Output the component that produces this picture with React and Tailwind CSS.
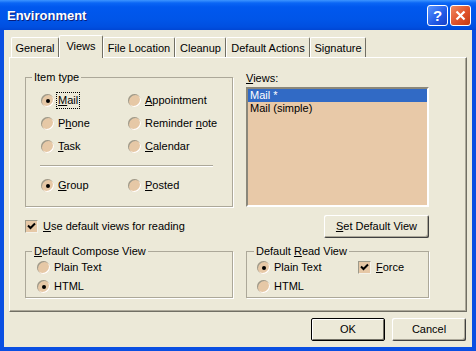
import React from "react";

const Key = ({ children }) => <span className="underline underline-offset-[1px]">{children}</span>;

const Radio = ({ checked }) => (
  <span className="flex h-[13px] w-[13px] shrink-0 items-center justify-center rounded-full bg-[#E6C8A6] shadow-[inset_1px_1px_0_#9c9a8c,inset_-1px_-1px_0_#ffffff]">
    {checked && <span className="h-[4px] w-[4px] rounded-full bg-black" />}
  </span>
);

const Check = ({ checked }) => (
  <span className="flex h-[13px] w-[13px] shrink-0 items-center justify-center border border-[#9D9A8A] border-b-[#f4f2ea] border-r-[#f4f2ea] bg-[#E6C8A6]">
    {checked && (
      <svg width="11" height="11" viewBox="0 0 11 11">
        <path d="M2 4.5 L4.5 7 L9 2.5" fill="none" stroke="#000" strokeWidth="2" />
      </svg>
    )}
  </span>
);

const Option = ({ checked, focus, children, className = "" }) => (
  <div className={`flex items-center gap-[4px] whitespace-nowrap ${className}`}>
    <Radio checked={checked} />
    <span className={focus ? "outline-1 outline-dotted outline-black outline-offset-[1px]" : ""}>{children}</span>
  </div>
);

// etched group box; padding lives on the inner div so the legend stays put
const Group = ({ legend, className = "", inner = "", legendClass = "ml-[6px]", children }) => (
  <fieldset className={`min-w-0 border border-[#ACA899] shadow-[1px_1px_0_#ffffff] ${className}`}>
    <legend className={`px-[2px] leading-[13px] ${legendClass}`}>{legend}</legend>
    <div className={inner}>{children}</div>
  </fieldset>
);

const Button = ({ children, isDefault, className = "" }) => (
  <div
    className={`flex h-[23px] items-center justify-center rounded-[2px] bg-[#ECE9D8] ${
      isDefault
        ? "border border-black shadow-[inset_1px_1px_0_#ffffff,inset_-1px_-1px_0_#716F64]"
        : "shadow-[inset_1px_1px_0_#ffffff,inset_-1px_-1px_0_#404040,inset_-2px_-2px_0_#ACA899]"
    } ${className}`}
  >
    {children}
  </div>
);

const TABS = [
  { label: "General", w: "w-[48px]" },
  { label: "Views", w: "w-[44px]", active: true },
  { label: "File Location", w: "w-[72px]" },
  { label: "Cleanup", w: "w-[51px]" },
  { label: "Default Actions", w: "w-[84px]" },
  { label: "Signature", w: "w-[56px]" },
];

export default function App() {
  return (
    <div className="flex h-[351px] w-[476px] flex-col bg-[#0A4FE2] font-['Liberation_Sans',Arial,sans-serif] text-[11px] leading-[13px] text-black">
      {/* Title bar */}
      <div className="flex h-[30px] shrink-0 items-center bg-[linear-gradient(180deg,#3d95ff_0px,#0a66f5_3px,#0058ee_7px,#0055e8_20px,#004fe0_27px,#0046d4_30px)] pl-[7px] pr-[5px]">
        <span className="flex-1 text-[13px] font-bold text-white [text-shadow:1px_1px_0_#0a1e7a]">Environment</span>
        <div className="flex gap-[2px]">
          <div className="flex h-[21px] w-[21px] items-center justify-center rounded-[3px] border border-white bg-[linear-gradient(135deg,#5a95ff,#2159e6_60%,#1941c8)] text-[15px] font-bold text-white">
            ?
          </div>
          <div className="flex h-[21px] w-[21px] items-center justify-center rounded-[3px] border border-white bg-[linear-gradient(135deg,#f08a63,#e0522a_55%,#c23a12)]">
            <svg width="11" height="11" viewBox="0 0 11 11">
              <path d="M1.5 1.5 L9.5 9.5 M9.5 1.5 L1.5 9.5" stroke="#fff" strokeWidth="2.2" />
            </svg>
          </div>
        </div>
      </div>

      {/* Client area */}
      <div className="mx-[4px] flex flex-1 flex-col bg-[#ECE9D8]">
        {/* Tabs */}
        <div className="flex h-[27px] items-end pl-[7px]">
          {TABS.map((t) => (
            <div
              key={t.label}
              className={`${t.w} flex items-center justify-center rounded-t-[2px] border-l border-t border-r border-l-white border-t-white border-r-[#716F64] bg-[#ECE9D8] ${
                t.active ? "relative z-10 -mb-px h-[23px] pb-[1px]" : "h-[20px] pt-[1px]"
              }`}
            >
              {t.label}
            </div>
          ))}
        </div>

        {/* Panel */}
        <div className="ml-[5px] mr-[5px] flex h-[255px] flex-col border border-b-[#716F64] border-l-white border-r-[#716F64] border-t-white px-[15px] pt-[13px] shadow-[inset_-1px_-1px_0_#ACA899]">
          {/* Row 1 */}
          <div className="flex gap-[13px]">
            <Group legend="Item type" className="w-[208px] shrink-0" inner="pb-[9px] pl-[14px] pt-[5px]">
              <div className="grid grid-cols-[87px_1fr] pl-[1px]">
                <Option checked focus className="h-[23px]"><Key>M</Key>ail</Option>
                <Option className="h-[23px]"><Key>A</Key>ppointment</Option>
                <Option className="h-[23px]">P<Key>h</Key>one</Option>
                <Option className="h-[23px]">Reminder <Key>n</Key>ote</Option>
                <Option className="h-[23px]"><Key>T</Key>ask</Option>
                <Option className="h-[23px]"><Key>C</Key>alendar</Option>
              </div>
              <div className="mr-[19px] mt-[7px] h-[2px] border-b border-t border-b-white border-t-[#ACA899]" />
              <div className="mt-[7px] grid grid-cols-[87px_1fr] pl-[1px]">
                <Option checked className="h-[23px]"><Key>G</Key>roup</Option>
                <Option className="h-[23px]"><Key>P</Key>osted</Option>
              </div>
            </Group>

            <div className="flex w-[183px] shrink-0 flex-col pt-[1px]">
              <span><Key>V</Key>iews:</span>
              <div className="mt-[2px] h-[120px] border-2 border-b-white border-l-[#8a877a] border-r-white border-t-[#8a877a] bg-[#E8C9A8]">
                <div className="h-[13px] bg-[#316AC5] pl-[2px] text-white">Mail *</div>
                <div className="h-[13px] pl-[2px]">Mail (simple)</div>
              </div>
            </div>
          </div>

          {/* Row 2 */}
          <div className="mt-[8px] flex h-[23px] items-center gap-[13px]">
            <div className="flex w-[208px] shrink-0 items-center gap-[5px]">
              <Check checked />
              <span><Key>U</Key>se default views for reading</span>
            </div>
            <div className="flex w-[183px] shrink-0 justify-end">
              <Button className="w-[105px]"><Key>S</Key>et Default View</Button>
            </div>
          </div>

          {/* Row 3 */}
          <div className="mt-[7px] flex gap-[13px]">
            <Group
              legend={<><Key>D</Key>efault Compose View</>}
              className="w-[208px] shrink-0"
              inner="pb-[1px] pl-[11px]"
            >
              <Option className="h-[19px]">Plain Text</Option>
              <Option checked className="h-[19px]">HTML</Option>
            </Group>
            <Group
              legend={<>Default <Key>R</Key>ead View</>}
              className="w-[183px] shrink-0"
              legendClass="ml-[7px]"
              inner="pb-[1px] pl-[10px]"
            >
              <div className="grid grid-cols-[101px_1fr]">
                <Option checked className="h-[19px]">Plain Text</Option>
                <div className="flex h-[19px] items-center gap-[5px]">
                  <Check checked />
                  <span><Key>F</Key>orce</span>
                </div>
                <Option className="h-[19px]">HTML</Option>
              </div>
            </Group>
          </div>
        </div>

        {/* Dialog buttons */}
        <div className="mt-[6px] flex justify-end gap-[7px] pr-[6px]">
          <Button isDefault className="w-[74px]">OK</Button>
          <Button className="w-[74px]">Cancel</Button>
        </div>
      </div>
      <div className="h-[4px] shrink-0" />
    </div>
  );
}
